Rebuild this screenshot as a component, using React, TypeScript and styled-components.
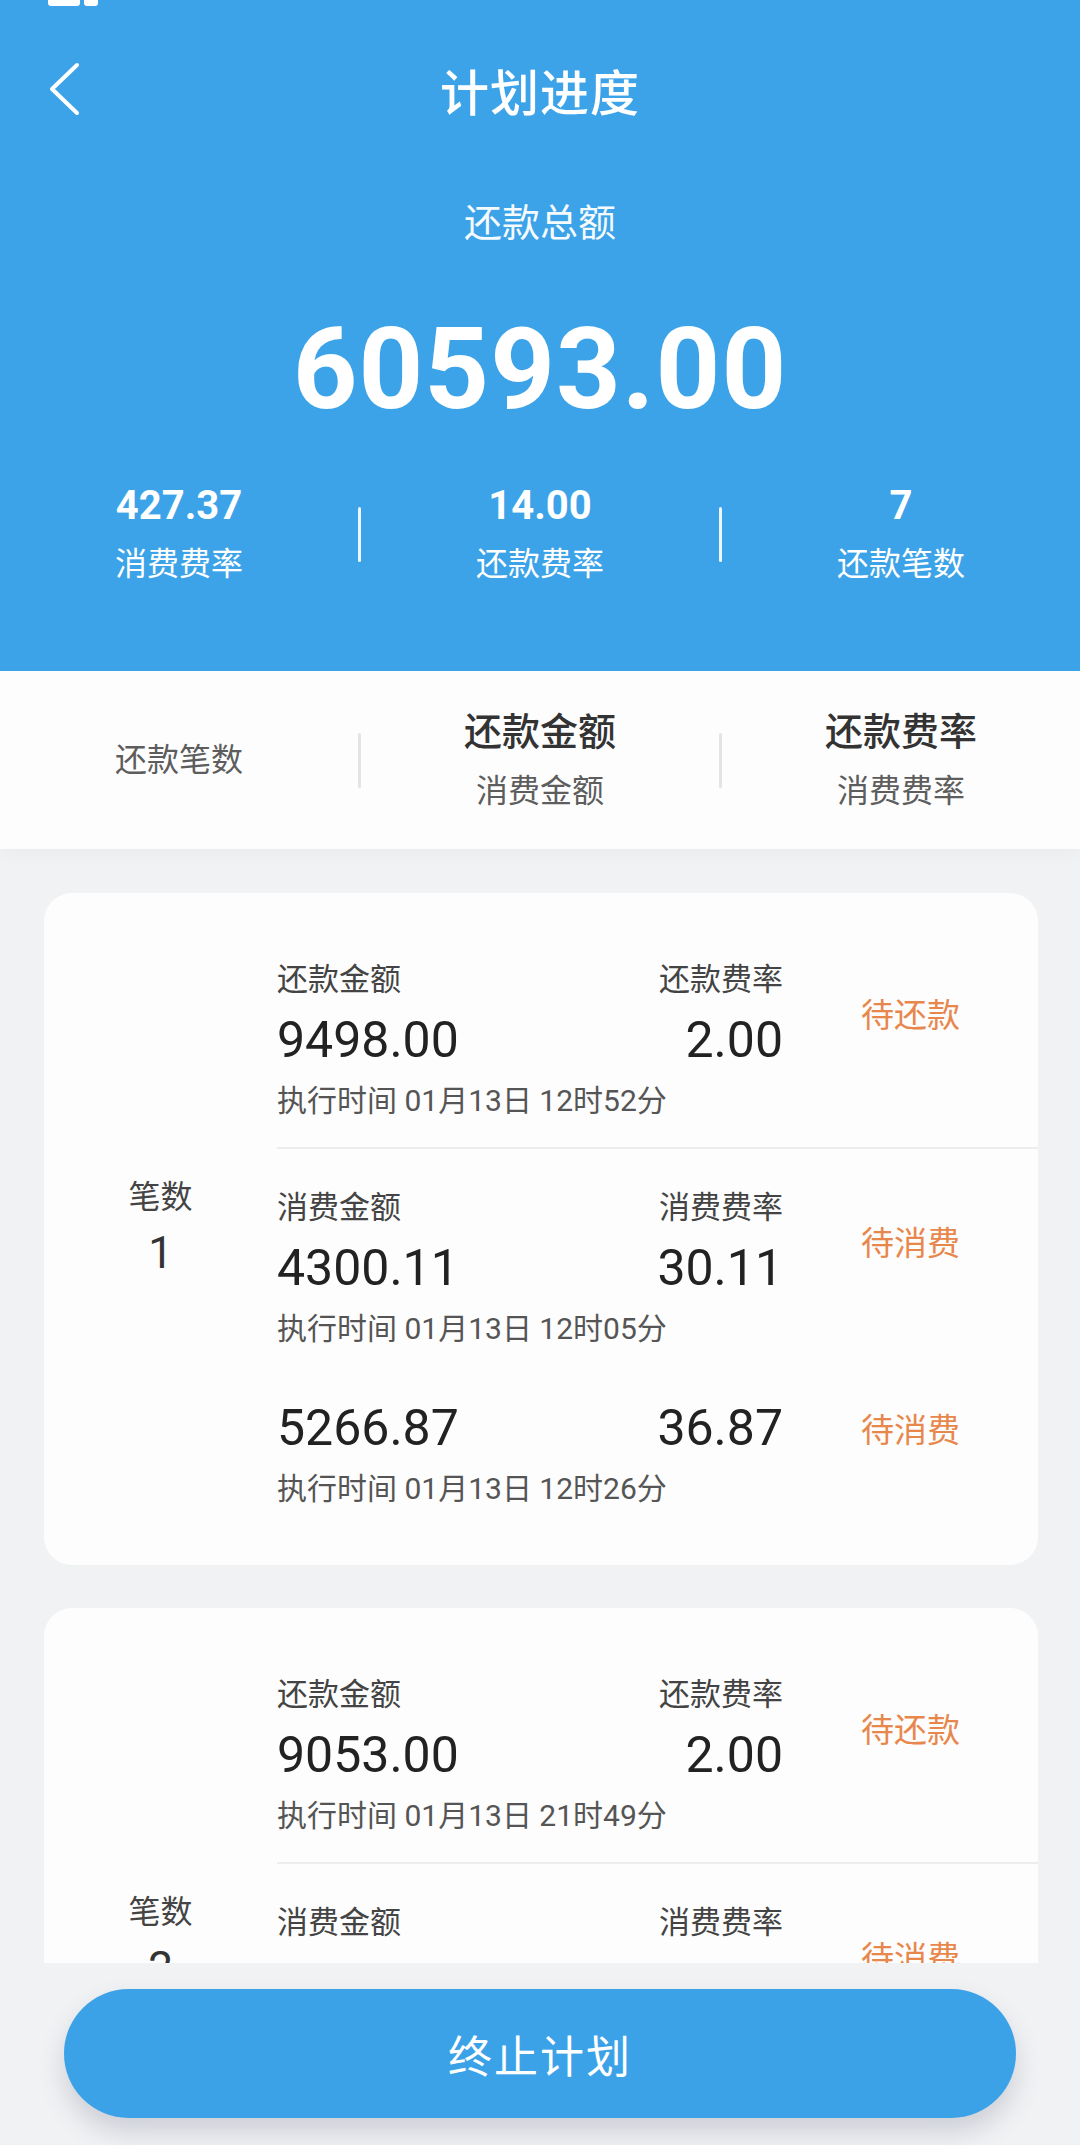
import React from "react";
import styled, { createGlobalStyle } from "styled-components";

const GlobalStyle = createGlobalStyle`
  html, body { margin: 0; padding: 0; }
  body {
    font-family: Roboto, "Noto Sans CJK SC", "Noto Sans", sans-serif;
    background: #f1f2f4;
  }
  * { box-sizing: border-box; }
`;

const BLUE = "#3ca3e8";

const Page = styled.div`
  width: 1080px;
  height: 2145px;
  display: flex;
  flex-direction: column;
  overflow: hidden;
  background: #f1f2f4;
`;

const Header = styled.header`
  background: ${BLUE};
  color: #fff;
  padding-bottom: 84px;
  display: flex;
  flex-direction: column;
  align-items: center;
`;

const StatusBar = styled.div`
  width: 100%;
  height: 30px;
  display: flex;
  gap: 4px;
  padding-left: 48px;
  align-items: flex-start;
`;

const StatusChip = styled.div<{ $w: number }>`
  width: ${(p) => p.$w}px;
  height: 6px;
  background: #fff;
  border-radius: 0 0 3px 3px;
`;

const NavBar = styled.div`
  width: 100%;
  height: 118px;
  display: grid;
  grid-template-columns: 160px 1fr 160px;
  align-items: center;
`;

const BackButton = styled.div`
  padding-left: 48px;
  display: flex;
  align-items: center;
`;

const Title = styled.h1`
  margin: 0;
  text-align: center;
  font-size: 49px;
  font-weight: 500;
  letter-spacing: 1px;
`;

const TotalLabel = styled.div`
  margin-top: 50px;
  font-size: 38px;
  line-height: 50px;
  opacity: 0.95;
`;

const TotalValue = styled.div`
  margin-top: 57px;
  font-size: 113px;
  line-height: 130px;
  font-weight: 700;
  letter-spacing: 1px;
`;

const StatsRow = styled.div`
  margin-top: 46px;
  width: 100%;
  display: grid;
  grid-template-columns: 1fr auto 1fr auto 1fr;
  align-items: center;
`;

const StatCell = styled.div`
  display: flex;
  flex-direction: column;
  align-items: center;
`;

const StatValue = styled.div`
  font-size: 40px;
  line-height: 50px;
  font-weight: 700;
`;

const StatLabel = styled.div`
  margin-top: 10px;
  font-size: 32px;
  line-height: 46px;
`;

const VDivider = styled.div<{ $color: string }>`
  width: 3px;
  height: 55px;
  background: ${(p) => p.$color};
  border-radius: 2px;
`;

const Tabs = styled.div`
  height: 178px;
  background: #fdfdfd;
  display: grid;
  grid-template-columns: 1fr auto 1fr auto 1fr;
  align-items: center;
  box-shadow: 0 8px 14px rgba(0, 0, 0, 0.025);
  position: relative;
  z-index: 1;
`;

const TabCell = styled.div`
  display: flex;
  flex-direction: column;
  align-items: center;
`;

const TabMain = styled.div`
  font-size: 38px;
  line-height: 50px;
  color: #333;
  font-weight: 500;
`;

const TabSub = styled.div<{ $spaced?: boolean }>`
  margin-top: ${(p) => (p.$spaced ? "11px" : "0")};
  font-size: 32px;
  line-height: 46px;
  color: #5d5d5d;
`;

const Scroll = styled.main`
  flex: 1;
  overflow: hidden;
  padding: 44px 42px 0 44px;
  display: flex;
  flex-direction: column;
  gap: 43px;
`;

const Card = styled.section`
  background: #fdfdfd;
  border-radius: 28px;
  display: flex;
  padding: 28px 0 30px;
  flex-shrink: 0;
`;

const IndexCol = styled.div`
  width: 233px;
  flex-shrink: 0;
  display: flex;
  flex-direction: column;
  align-items: center;
  justify-content: center;
  color: #444;
`;

const IndexLabel = styled.div`
  font-size: 32px;
  line-height: 50px;
`;

const IndexValue = styled.div`
  font-size: 44px;
  line-height: 62px;
  color: #333;
`;

const Groups = styled.div`
  flex: 1;
  display: flex;
  flex-direction: column;
`;

const Group = styled.div<{ $last?: boolean }>`
  padding: 37px 0 23px;
  border-bottom: ${(p) => (p.$last ? "none" : "2px solid #ededed")};
  display: flex;
  flex-direction: column;
  gap: 38px;
`;

const Entry = styled.div`
  display: flex;
  flex-direction: column;
`;

const EntryTop = styled.div`
  display: flex;
  align-items: center;
`;

const EntryMain = styled.div`
  width: 506px;
  display: flex;
  flex-direction: column;
`;

const Pair = styled.div`
  display: flex;
  justify-content: space-between;
`;

const FieldLabel = styled.span`
  font-size: 31px;
  line-height: 44px;
  color: #444;
`;

const Amount = styled.span`
  font-size: 50px;
  line-height: 76px;
  color: #222;
`;

const Status = styled.span<{ $raised?: boolean }>`
  margin-left: 78px;
  margin-bottom: ${(p) => (p.$raised ? "10px" : "0")};
  font-size: 33px;
  color: #e8874c;
`;

const ExecTime = styled.div`
  font-size: 30px;
  line-height: 46px;
  color: #555;
`;

const Footer = styled.footer`
  height: 182px;
  flex-shrink: 0;
  background: #f1f2f4;
  padding: 26px 64px 0;
  position: relative;
  z-index: 2;
`;

const StopButton = styled.button`
  width: 100%;
  height: 129px;
  border: none;
  border-radius: 65px;
  background: #3ba2e8;
  color: #fff;
  font-family: inherit;
  font-size: 44px;
  letter-spacing: 2px;
  box-shadow: 0 14px 26px rgba(60, 70, 100, 0.2);
`;

type Item = {
  labels?: [string, string];
  amount: string;
  rate: string;
  status: string;
  time: string;
};

type Plan = { index: number; groups: Item[][] };

const plans: Plan[] = [
  {
    index: 1,
    groups: [
      [
        {
          labels: ["还款金额", "还款费率"],
          amount: "9498.00",
          rate: "2.00",
          status: "待还款",
          time: "执行时间 01月13日 12时52分",
        },
      ],
      [
        {
          labels: ["消费金额", "消费费率"],
          amount: "4300.11",
          rate: "30.11",
          status: "待消费",
          time: "执行时间 01月13日 12时05分",
        },
        {
          amount: "5266.87",
          rate: "36.87",
          status: "待消费",
          time: "执行时间 01月13日 12时26分",
        },
      ],
    ],
  },
  {
    index: 2,
    groups: [
      [
        {
          labels: ["还款金额", "还款费率"],
          amount: "9053.00",
          rate: "2.00",
          status: "待还款",
          time: "执行时间 01月13日 21时49分",
        },
      ],
      [
        {
          labels: ["消费金额", "消费费率"],
          amount: "5175.22",
          rate: "36.22",
          status: "待消费",
          time: "执行时间 01月13日 22时10分",
        },
        {
          amount: "3841.65",
          rate: "26.65",
          status: "待消费",
          time: "执行时间 01月13日 22时31分",
        },
      ],
    ],
  },
];

const ChevronLeft = () => (
  <svg width="34" height="54" viewBox="0 0 34 54" fill="none">
    <path
      d="M29 3 L4 27 L29 51"
      stroke="#fff"
      strokeWidth="4"
      strokeLinecap="round"
      strokeLinejoin="round"
    />
  </svg>
);

export default function App() {
  return (
    <Page>
      <GlobalStyle />
      <Header>
        <StatusBar>
          <StatusChip $w={32} />
          <StatusChip $w={14} />
        </StatusBar>
        <NavBar>
          <BackButton>
            <ChevronLeft />
          </BackButton>
          <Title>计划进度</Title>
          <div />
        </NavBar>
        <TotalLabel>还款总额</TotalLabel>
        <TotalValue>60593.00</TotalValue>
        <StatsRow>
          <StatCell>
            <StatValue>427.37</StatValue>
            <StatLabel>消费费率</StatLabel>
          </StatCell>
          <VDivider $color="rgba(255,255,255,0.9)" />
          <StatCell>
            <StatValue>14.00</StatValue>
            <StatLabel>还款费率</StatLabel>
          </StatCell>
          <VDivider $color="rgba(255,255,255,0.9)" />
          <StatCell>
            <StatValue>7</StatValue>
            <StatLabel>还款笔数</StatLabel>
          </StatCell>
        </StatsRow>
      </Header>

      <Tabs>
        <TabCell>
          <TabSub>还款笔数</TabSub>
        </TabCell>
        <VDivider $color="#e4e4e4" />
        <TabCell>
          <TabMain>还款金额</TabMain>
          <TabSub $spaced>消费金额</TabSub>
        </TabCell>
        <VDivider $color="#e4e4e4" />
        <TabCell>
          <TabMain>还款费率</TabMain>
          <TabSub $spaced>消费费率</TabSub>
        </TabCell>
      </Tabs>

      <Scroll>
        {plans.map((plan) => (
          <Card key={plan.index}>
            <IndexCol>
              <IndexLabel>笔数</IndexLabel>
              <IndexValue>{plan.index}</IndexValue>
            </IndexCol>
            <Groups>
              {plan.groups.map((group, gi) => (
                <Group key={gi} $last={gi === plan.groups.length - 1}>
                  {group.map((item, ii) => (
                    <Entry key={ii}>
                      <EntryTop>
                        <EntryMain>
                          {item.labels && (
                            <Pair>
                              <FieldLabel>{item.labels[0]}</FieldLabel>
                              <FieldLabel>{item.labels[1]}</FieldLabel>
                            </Pair>
                          )}
                          <Pair>
                            <Amount>{item.amount}</Amount>
                            <Amount>{item.rate}</Amount>
                          </Pair>
                        </EntryMain>
                        <Status $raised={!!item.labels}>{item.status}</Status>
                      </EntryTop>
                      <ExecTime>{item.time}</ExecTime>
                    </Entry>
                  ))}
                </Group>
              ))}
            </Groups>
          </Card>
        ))}
      </Scroll>

      <Footer>
        <StopButton>终止计划</StopButton>
      </Footer>
    </Page>
  );
}
